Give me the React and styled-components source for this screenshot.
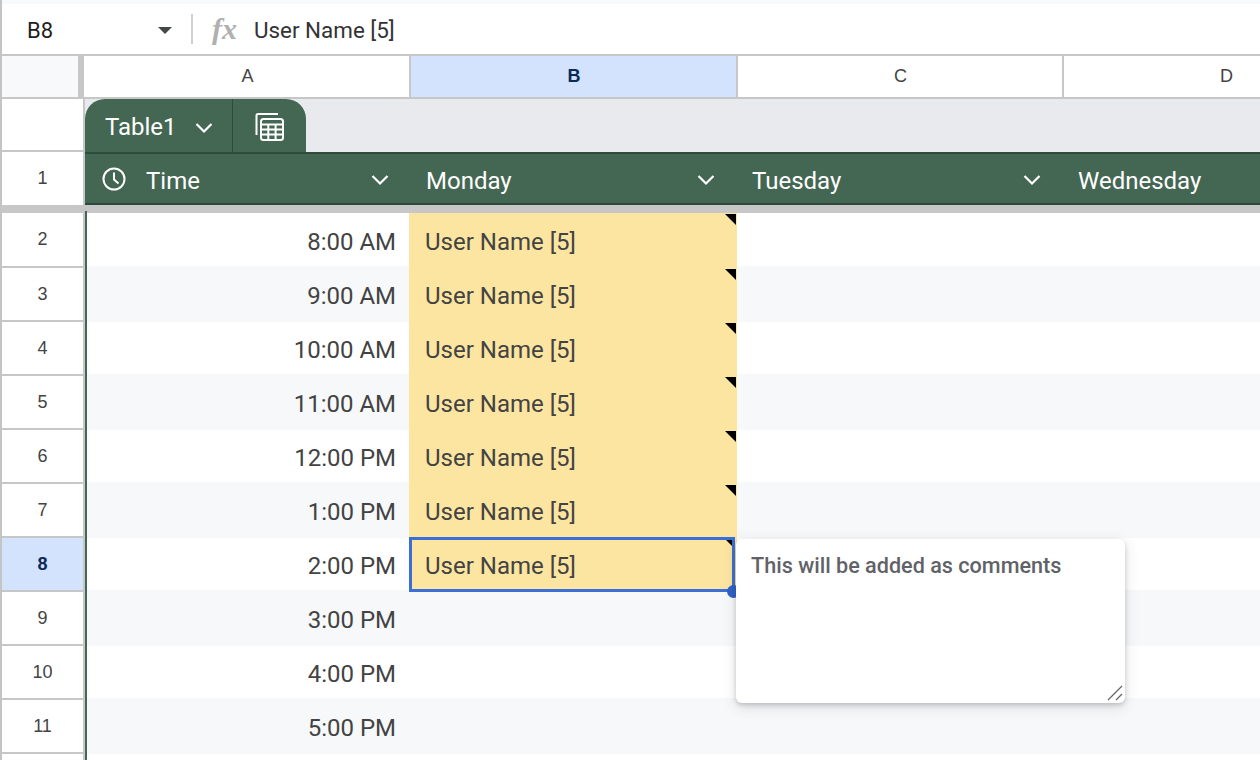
import React from 'react';
import styled, { createGlobalStyle } from 'styled-components';

const Global = createGlobalStyle`
  html, body { margin: 0; padding: 0; background: #fff; }
  * { box-sizing: border-box; }
`;
const HEAD_COLS = '83px 326px 327px 326px 326px';
const BODY_COLS = '83px 324px 328px 326px 326px';
const GREEN_COLS = '83px 325px 326px 326px 326px';
const BAND = '#f6f8f9';
const GREEN = '#446753';
const Page = styled.div`
  width: 1260px; height: 760px; overflow: hidden; position: relative;
  background: #fff; font-family: Roboto, "Liberation Sans", sans-serif; color: #3c4043;
  border-left: 2px solid #c4c4c4;
`;
const TopStrip = styled.div`height: 4px; background: #f8f9fa;`;
const FormulaBar = styled.div`
  height: 52px; display: flex; align-items: center; border-bottom: 2px solid #c7c7c7; background: #fff;
`;
const NameBox = styled.div`
  width: 189px; padding: 2px 19px 0 25px; display: flex; align-items: center; justify-content: space-between;
  font-size: 22px; color: #1f1f1f;
`;
const Caret = styled.span`
  width: 0; height: 0; border-left: 7px solid transparent; border-right: 7px solid transparent; border-top: 7px solid #444746;
`;
const Divider = styled.span`width: 2px; height: 30px; background: #d0d0d0;`;
const Fx = styled.span`
  margin-left: 19px; width: 42px; font-family: "Liberation Serif", serif; font-style: italic; font-weight: 700;
  font-size: 30px; color: #b0b0b0;
`;
const FormulaText = styled.span`font-size: 22.4px; color: #333; padding-top: 1px;`;
const ColRow = styled.div`
  display: grid; grid-template-columns: ${HEAD_COLS}; height: 43px; border-bottom: 2px solid #c7c7c7;
`;
const Corner = styled.div`
  width: 82px; background: #f8f9fa; border-right: 6px solid #c7c7c7;
`;
const ColHead = styled.div`
  display: flex; align-items: center; justify-content: center; font-family: "Liberation Sans", sans-serif;
  font-size: 18px; padding-left: 1px;
  font-weight: ${p => (p.$active ? 700 : 400)};
  color: ${p => (p.$active ? '#0b2a55' : '#444')};
  background: ${p => (p.$active ? '#d3e3fd' : '#fff')};
  border-right: 2px solid #c7c7c7;
`;
const TabRow = styled.div`display: flex; height: 53px;`;
const Gutter = styled.div`
  display: flex; align-items: center; justify-content: center;
  font-family: "Liberation Sans", sans-serif; font-size: 18px; color: #444;
  font-weight: ${p => (p.$active ? 700 : 400)};
  ${p => p.$active && 'color: #0b2a55; background: #d3e3fd;'}
  border-right: 2px solid #c7c7c7;
  border-bottom: ${p => (p.$flat ? '0' : '2px solid #c7c7c7')};
  width: 83px; height: 100%;
`;
const TabBand = styled.div`flex: 1; background: #e8eaed; display: flex; align-items: flex-end;`;
const Tab = styled.div`
  display: flex; height: 53px; width: 221px; background: ${GREEN}; color: #fff; border-radius: 20px 20px 0 0;
`;
const TabName = styled.div`
  width: 148px; display: flex; align-items: center; padding: 2px 0 0 20px; gap: 18px; font-size: 24px; font-weight: 450;
  border-right: 1px solid #2f4b3b;
`;
const TabIcon = styled.div`flex: 1; display: flex; align-items: center; justify-content: center; padding-top: 2px;`;
const HeadRow = styled.div`display: grid; grid-template-columns: ${GREEN_COLS}; height: 53px;`;
const GreenCell = styled.div`
  background: ${GREEN}; color: #fff; display: flex; align-items: center; font-size: 24px; font-weight: 450;
  border-top: 2px solid #2f4b3b; border-bottom: 2px solid #2f4b3b; padding: 0 21px 0 16px; justify-content: space-between;
`;
const HeadLabel = styled.div`display: flex; align-items: center; gap: 20px; padding-top: 4px;`;
const ClockSvg = styled.svg`margin: -4px 0 0 1px;`;
const ChevronSvg = styled.svg`flex: none; margin-top: 2px;`;
const TabChevron = styled.svg`flex: none;`;
const Freeze = styled.div`height: 8px; background: #c7c7c7;`;
const Row = styled.div`
  display: grid; grid-template-columns: ${BODY_COLS};
  height: ${p => (p.$first ? 55 : 54)}px;
`;
const Cell = styled.div`
  position: relative; display: flex; align-items: center; font-size: 24px; padding-top: 2px;
  background: ${p => p.$bg || 'transparent'};
  ${p => p.$band && `box-shadow: 0 -2px 0 ${BAND};`}
  color: #434343; white-space: nowrap;
  ${p => (p.$right ? 'justify-content: flex-end; padding-right: 13px;' : 'padding-left: 16px;')}
`;
const TableEdge = styled.span`
  position: absolute; left: 0; top: -2px; bottom: 0; width: 2px; background: ${GREEN};
`;
const NoteMark = styled.span`
  position: absolute; top: ${p => (p.$selected ? '2px' : '1px')}; right: ${p => (p.$selected ? '4px' : '1px')};
  width: 0; height: 0; border-top: ${p => (p.$selected ? '7px' : '11px')} solid #000;
  border-left: ${p => (p.$selected ? '7px' : '11px')} solid transparent;
`;
const Selection = styled.span`
  position: absolute; inset: -1px 2px 0 0; border: 3px solid #3a6fd8; pointer-events: none; z-index: 1;
`;
const Handle = styled.span`
  position: absolute; width: 13px; height: 13px; border-radius: 50%; background: #2f5fc8; right: -3px; bottom: -6px; z-index: 2;
`;
const Comment = styled.div`
  position: absolute; left: 734px; top: 539px; width: 389px; height: 164px; background: #fff; border-radius: 6px; z-index: 3;
  box-shadow: 0 2px 4px rgba(60,64,67,.22), 0 4px 14px rgba(60,64,67,.16);
  padding: 14px 15px; font-size: 21.6px; font-weight: 500; color: #5f6368;
`;
const Grip = styled.svg`position: absolute; right: 2px; bottom: 2px;`;

const Chevron = ({ as }) => (
  <ChevronSvg as={as} width="18" height="18" viewBox="0 0 18 18" fill="none" stroke="#fff" strokeWidth="2.2"><path d="M1.5 5 9 12.5 16.5 5" /></ChevronSvg>
);
const Clock = () => (
  <ClockSvg width="24" height="24" viewBox="0 0 24 24" fill="none" stroke="#fff" strokeWidth="2"><circle cx="12" cy="12" r="10.5" /><path d="M12 5.5V12.5L16.5 16.5" /></ClockSvg>
);
const TableIcon = () => (
  <svg width="30" height="30" viewBox="0 0 30 30" fill="none" stroke="#fff" strokeWidth="2">
    <path d="M1.5 23V3.5A1.5 1.5 0 0 1 3 2H23" />
    <rect x="6" y="7" width="22" height="21" rx="2.5" />
    <path d="M6 12.5H28M6 17.5H28M6 22.5H28M13.3 12.5V28M20.6 12.5V28" />
  </svg>
);

const times = ['8:00 AM', '9:00 AM', '10:00 AM', '11:00 AM', '12:00 PM', '1:00 PM', '2:00 PM', '3:00 PM', '4:00 PM', '5:00 PM', ''];

export default function App() {
  return (
    <Page>
      <Global />
      <TopStrip />
      <FormulaBar>
        <NameBox>B8<Caret /></NameBox>
        <Divider />
        <Fx>fx</Fx>
        <FormulaText>User Name [5]</FormulaText>
      </FormulaBar>
      <ColRow>
        <Corner />
        <ColHead>A</ColHead>
        <ColHead $active>B</ColHead>
        <ColHead>C</ColHead>
        <ColHead>D</ColHead>
      </ColRow>
      <TabRow>
        <Gutter />
        <TabBand>
          <Tab>
            <TabName>Table1 <Chevron as={TabChevron} /></TabName>
            <TabIcon><TableIcon /></TabIcon>
          </Tab>
        </TabBand>
      </TabRow>
      <HeadRow>
        <Gutter $flat>1</Gutter>
        <GreenCell><HeadLabel><Clock />Time</HeadLabel><Chevron /></GreenCell>
        <GreenCell><HeadLabel>Monday</HeadLabel><Chevron /></GreenCell>
        <GreenCell><HeadLabel>Tuesday</HeadLabel><Chevron /></GreenCell>
        <GreenCell><HeadLabel>Wednesday</HeadLabel></GreenCell>
      </HeadRow>
      <Freeze />
      {times.map((t, i) => {
        const n = i + 2;
        const band = n % 2 === 1;
        const filled = n <= 8;
        const selected = n === 8;
        return (
          <Row key={n} $first={i === 0}>
            <Gutter $active={selected}>{t ? n : ''}</Gutter>
            <Cell $bg={band ? BAND : undefined} $band={band} $right><TableEdge />{t}</Cell>
            <Cell $bg={filled ? '#fce5a0' : band ? BAND : undefined} $band={band && !filled}>
              {filled && 'User Name [5]'}
              {filled && <NoteMark $selected={selected} />}
              {selected && <Selection />}
              {selected && <Handle />}
            </Cell>
            <Cell $bg={band ? BAND : undefined} $band={band} />
            <Cell $bg={band ? BAND : undefined} $band={band} />
          </Row>
        );
      })}
      <Comment>
        This will be added as comments
        <Grip width="16" height="16" viewBox="0 0 16 16" stroke="#666" strokeWidth="1.3" fill="none">
          <path d="M1 15 15 1M9 15 15 9" />
        </Grip>
      </Comment>
    </Page>
  );
}
